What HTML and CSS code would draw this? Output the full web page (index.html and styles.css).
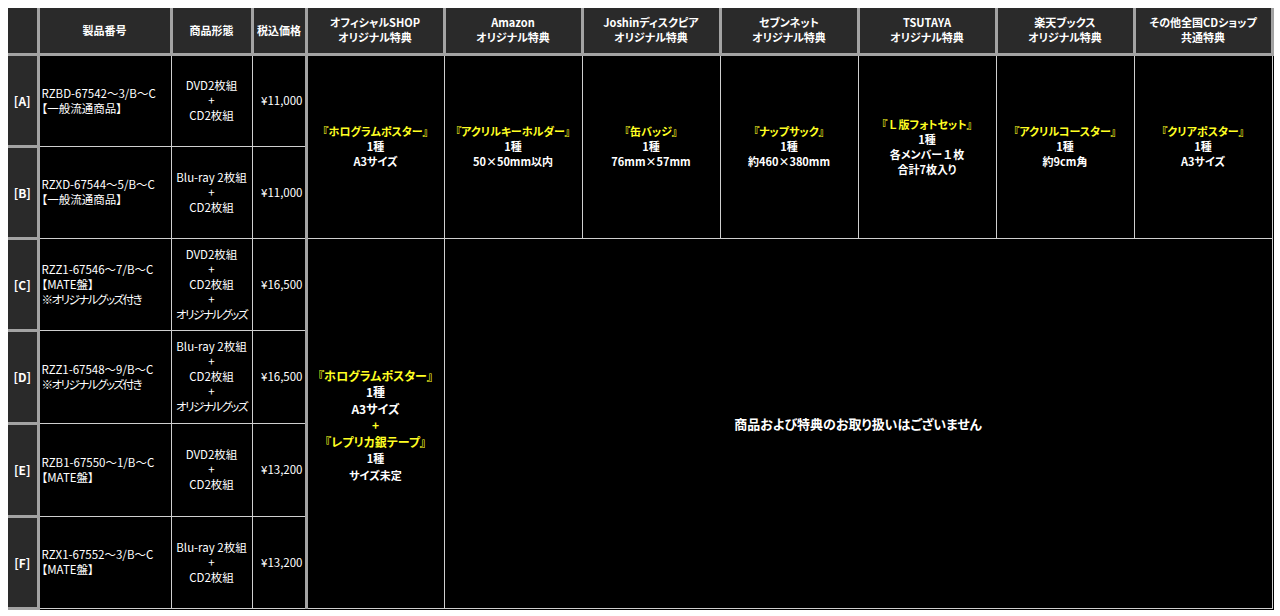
FILE: index.html
```html
<!DOCTYPE html>
<html lang="ja">
<head>
<meta charset="utf-8">
<link rel="stylesheet" href="styles.css">
</head>
<body>
<table class="tokuten">
  <colgroup>
    <col class="c-label"><col class="c-num"><col class="c-form"><col class="c-price">
    <col class="c-shop"><col class="c-shop"><col class="c-shop"><col class="c-shop"><col class="c-shop"><col class="c-shop"><col class="c-shop">
  </colgroup>
  <thead>
    <tr class="head-row">
      <th></th>
      <th>製品番号</th>
      <th>商品形態</th>
      <th>税込価格</th>
      <th class="sep">オフィシャルSHOP<br>オリジナル特典</th>
      <th>Amazon<br>オリジナル特典</th>
      <th>Joshinディスクピア<br>オリジナル特典</th>
      <th>セブンネット<br>オリジナル特典</th>
      <th>TSUTAYA<br>オリジナル特典</th>
      <th>楽天ブックス<br>オリジナル特典</th>
      <th>その他全国CDショップ<br>共通特典</th>
    </tr>
  </thead>
  <tbody>
    <tr class="r92">
      <th class="label">[A]</th>
      <td class="num">RZBD-67542～3/B～C<br>【一般流通商品】</td>
      <td class="form">DVD2枚組<br>+<br>CD2枚組</td>
      <td class="price">¥11,000</td>
      <td class="bonus sep" rowspan="2"><span class="ttl">『ホログラムポスター』</span><br>1種<br>A3サイズ</td>
      <td class="bonus" rowspan="2"><span class="ttl">『アクリルキーホルダー』</span><br>1種<br>50×50mm以内</td>
      <td class="bonus" rowspan="2"><span class="ttl">『缶バッジ』</span><br>1種<br>76mm×57mm</td>
      <td class="bonus" rowspan="2"><span class="ttl">『ナップサック』</span><br>1種<br>約460×380mm</td>
      <td class="bonus" rowspan="2"><span class="ttl">『<span class="wide">Ｌ</span>版フォトセット』</span><br>1種<br>各メンバー<span class="wide">１</span>枚<br>合計7枚入り</td>
      <td class="bonus" rowspan="2"><span class="ttl">『アクリルコースター』</span><br>1種<br>約9cm角</td>
      <td class="bonus" rowspan="2"><span class="ttl">『クリアポスター』</span><br>1種<br>A3サイズ</td>
    </tr>
    <tr class="r92">
      <th class="label">[B]</th>
      <td class="num">RZXD-67544～5/B～C<br>【一般流通商品】</td>
      <td class="form">Blu-ray 2枚組<br>+<br>CD2枚組</td>
      <td class="price">¥11,000</td>
    </tr>
    <tr class="r92">
      <th class="label">[C]</th>
      <td class="num">RZZ1-67546～7/B～C<br>【MATE盤】<br><span class="kana">※オリジナルグッズ付き</span></td>
      <td class="form">DVD2枚組<br>+<br>CD2枚組<br>+<br><span class="kana">オリジナルグッズ</span></td>
      <td class="price">¥16,500</td>
      <td class="bonus big sep" rowspan="4"><span class="ttl">『ホログラムポスター』</span><br>1種<br>A3サイズ<br><span class="ttl">+</span><br><span class="ttl">『レプリカ銀テープ』</span><br><span class="sm">1種</span><br><span class="sm">サイズ未定</span></td>
      <td class="none" colspan="6" rowspan="4">商品および特典のお取り扱いはございません</td>
    </tr>
    <tr class="r93">
      <th class="label">[D]</th>
      <td class="num">RZZ1-67548～9/B～C<br><span class="kana">※オリジナルグッズ付き</span></td>
      <td class="form">Blu-ray 2枚組<br>+<br>CD2枚組<br>+<br><span class="kana">オリジナルグッズ</span></td>
      <td class="price">¥16,500</td>
    </tr>
    <tr class="r93">
      <th class="label">[E]</th>
      <td class="num">RZB1-67550～1/B～C<br>【MATE盤】</td>
      <td class="form">DVD2枚組<br>+<br>CD2枚組</td>
      <td class="price">¥13,200</td>
    </tr>
    <tr class="r92">
      <th class="label">[F]</th>
      <td class="num">RZX1-67552～3/B～C<br>【MATE盤】</td>
      <td class="form">Blu-ray 2枚組<br>+<br>CD2枚組</td>
      <td class="price">¥13,200</td>
    </tr>
  </tbody>
</table>
</body>
</html>
```

FILE: styles.css
```css
html, body {
  margin: 0;
  padding: 0;
  background: #ffffff;
}
body {
  padding: 8px;
  font-family: "Noto Sans CJK JP", "Noto Sans", sans-serif;
  font-feature-settings: "palt";
  font-size: 11px;
  line-height: 15px;
  color: #ffffff;
}
.tokuten {
  border-collapse: collapse;
  table-layout: fixed;
  width: 1265px;
  background: #000000;
}
.c-label { width: 30px; }
.c-num { width: 133px; }
.c-form { width: 81px; }
.c-price { width: 54px; }
.c-shop { width: 138px; }

.tokuten th,
.tokuten td {
  border: 1px solid #cfcfcf;
  padding: 0 1px;
  text-align: center;
  vertical-align: middle;
  overflow: hidden;
  white-space: nowrap;
}
.tokuten th {
  background: #2a2a2a;
  font-weight: bold;
  border: 3px solid #a3a3a3;
}
.tokuten thead th {
  border-top: 0;
}
.tokuten th:first-child {
  border-left: 0;
}
.tokuten th.label {
  font-size: 12px;
}
.head-row { height: 46px; }
.r92 { height: 92px; }
.r93 { height: 93px; }

.tokuten td.num {
  text-align: left;
  padding-left: 2px;
  font-size: 11.5px;
}
.tokuten td.price {
  text-align: right;
  padding-right: 2px;
  font-size: 11.5px;
}
.tokuten td.form {
  font-size: 11.5px;
}
.kana {
  letter-spacing: -1.5px;
}
.wide {
  font-feature-settings: normal;
}
.tokuten .sep {
  border-left: 3px solid #a3a3a3;
}
.bonus {
  font-weight: bold;
}
.ttl {
  color: #ffff22;
}
.tokuten td.big {
  font-size: 12px;
  line-height: 16.5px;
  padding-top: 5px;
}
.big .sm {
  font-size: 11px;
}
.none {
  font-size: 13px;
  font-weight: bold;
}
```
